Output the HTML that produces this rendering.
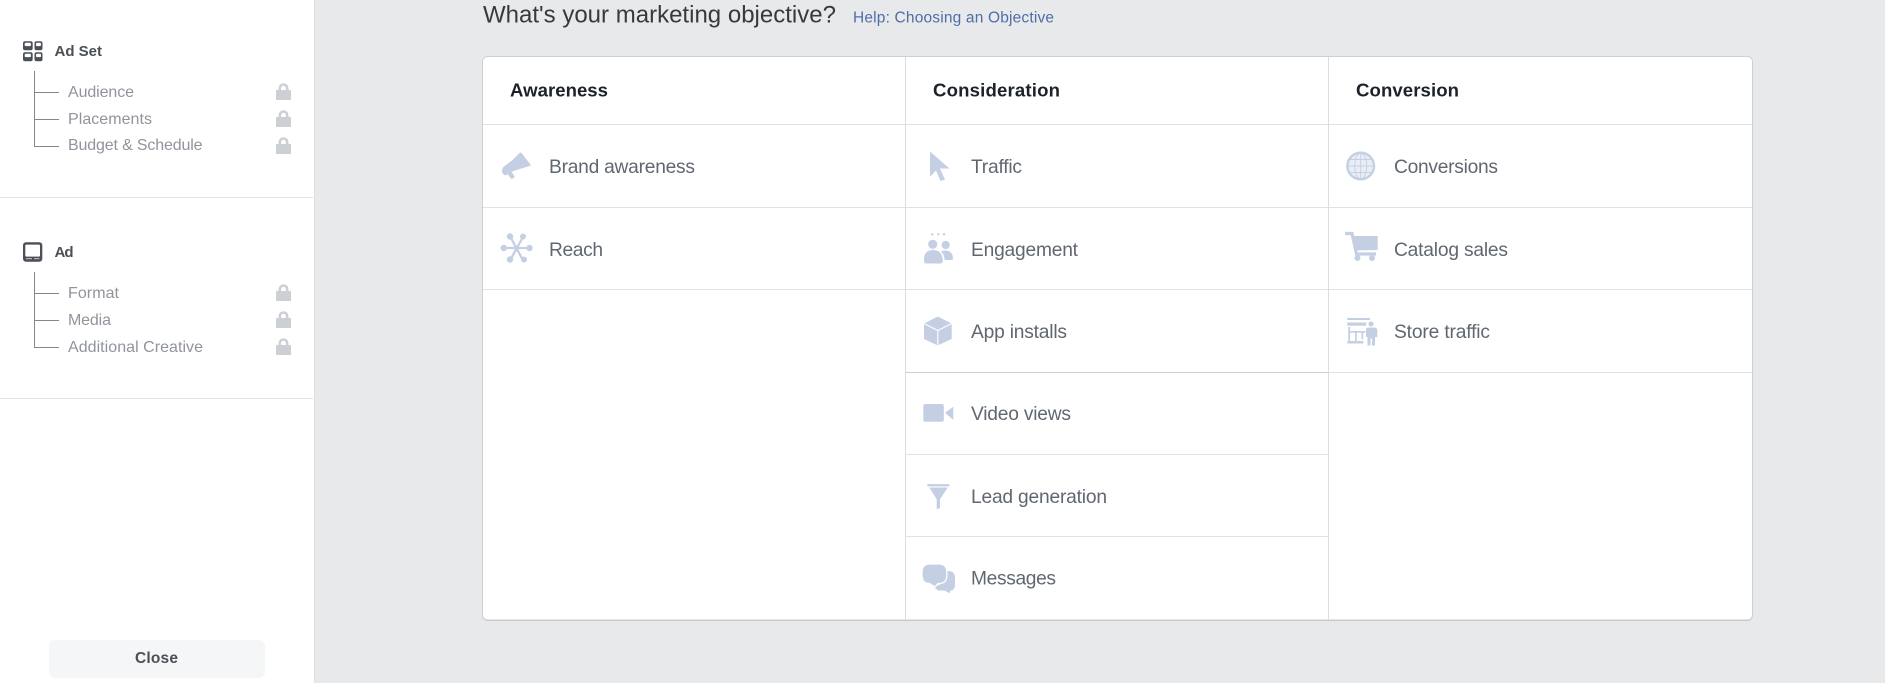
<!DOCTYPE html>
<html>
<head>
<meta charset="utf-8">
<title>Marketing objective</title>
<style>
html,body{margin:0;padding:0;width:1885px;height:683px;overflow:hidden;background:#e8e9eb}
svg{display:block}
text{font-family:"Liberation Sans",Arial,sans-serif;white-space:pre}
.item{font-size:19.2px;fill:#606770}
.head{font-size:18.6px;font-weight:700;fill:#1d2129}
.sub{font-size:16px;fill:#90949c}
.sec{font-size:15px;font-weight:700;fill:#4b4f56}
.ln{stroke:#e0e1e4;stroke-width:1;fill:none}
.tr{stroke:#85878b;stroke-width:1;fill:none}
.ic{fill:#c5cfe3}
.ics{stroke:#c5cfe3;fill:none}
.lk{fill:#ccd0d5}
</style>
</head>
<body>
<svg width="1885" height="683" viewBox="0 0 1885 683" xmlns="http://www.w3.org/2000/svg">
<defs>
<g id="lock">
<path class="lk" d="M0.5 7h14q.5 0 .5 .5v9q0 .5-.5 .5h-14q-.5 0-.5-.5v-9q0-.5 .5-.5z"/>
<path d="M3.8 8V5.2a3.700 3.700 0 0 1 7.400 0V8" fill="none" stroke="#ccd0d5" stroke-width="2.600"/>
</g>
</defs>
<rect width="1885" height="683" fill="#e8e9eb"/>

<!-- Sidebar -->
<rect x="0" y="0" width="314" height="683" fill="#fff"/>
<rect x="314" y="0" width="1" height="683" fill="#dddfe2"/>
<path d="M0 197.500H313M0 398.500H313" stroke="#e2e3e6" stroke-width="1" fill="none"/>

<!-- Ad Set icon -->
<g>
<rect x="23" y="41.300" width="9.700" height="8.900" rx="2" fill="#4b4f56"/>
<rect x="34.500" y="41.300" width="8" height="8.900" rx="2" fill="#4b4f56"/>
<rect x="23" y="52.300" width="9.700" height="8.900" rx="2" fill="#4b4f56"/>
<rect x="34.500" y="52.300" width="8" height="8.900" rx="2" fill="#4b4f56"/>
<rect x="24.700" y="42.700" width="6.200" height="3.400" rx="1" fill="#fff"/>
<rect x="36" y="42.700" width="5" height="3.400" rx="1" fill="#fff"/>
<rect x="24.700" y="53.700" width="6.200" height="3.400" rx="1" fill="#fff"/>
<rect x="36" y="53.700" width="5" height="3.400" rx="1" fill="#fff"/>
</g>
<text class="sec" x="54.500" y="56" textLength="47.500">Ad Set</text>

<path class="tr" d="M34.500 71V146.500H59M34.500 92.500H59M34.500 119.500H59"/>
<text class="sub" x="68" y="97" textLength="66">Audience</text>
<text class="sub" x="68" y="124" textLength="84">Placements</text>
<text class="sub" x="68" y="150" textLength="134.500">Budget &amp; Schedule</text>
<use href="#lock" x="276" y="83"/>
<use href="#lock" x="276" y="110"/>
<use href="#lock" x="276" y="137"/>

<!-- Ad icon -->
<g>
<rect x="23" y="242.300" width="19.300" height="19.500" rx="3" fill="#4b4f56"/>
<rect x="25.300" y="244.600" width="14.700" height="12" rx="1" fill="#fff"/>
<rect x="26" y="258.200" width="6" height="1" fill="#c5c7ca"/>
<rect x="34" y="258.200" width="5.500" height="1" fill="#c5c7ca"/>
</g>
<text class="sec" x="54.500" y="257" textLength="19">Ad</text>

<path class="tr" d="M34.500 272V347.500H59M34.500 293.500H59M34.500 320.500H59"/>
<text class="sub" x="68" y="298" textLength="51">Format</text>
<text class="sub" x="68" y="325" textLength="43">Media</text>
<text class="sub" x="68" y="352" textLength="135">Additional Creative</text>
<use href="#lock" x="276" y="284"/>
<use href="#lock" x="276" y="311"/>
<use href="#lock" x="276" y="338"/>

<!-- Close -->
<rect x="49" y="640" width="216" height="38" rx="6" fill="#f5f6f7"/>
<text x="135" y="663" font-size="15.500" font-weight="700" fill="#4b4f56" textLength="43">Close</text>

<!-- Title -->
<text x="483" y="22.700" font-size="24" fill="#36393f" textLength="353">What's your marketing objective?</text>
<text x="853" y="22.500" font-size="15.500" fill="#4f6ea8" textLength="201">Help: Choosing an Objective</text>

<!-- Card -->
<rect x="482.500" y="57" width="1270" height="564" rx="5" fill="#bfc1c5"/>
<rect x="482.500" y="56.500" width="1270" height="563.500" rx="5" fill="#fff" stroke="#ccd0d5"/>
<path class="ln" d="M483 124.500H1752M483 207.500H1752M483 289.500H1752M905 372.500H1752M905 454.500H1329M905 536.500H1329"/>
<path d="M905 372.500H1329" stroke="#ccd0d5" stroke-width="1"/>
<path d="M905.500 57V620M1328.500 57V620" stroke="#dcdde0" stroke-width="1"/>

<text class="head" x="510" y="96.500" textLength="98">Awareness</text>
<text class="head" x="933" y="96.500" textLength="127">Consideration</text>
<text class="head" x="1356" y="96.500" textLength="103">Conversion</text>

<text class="item" x="549" y="173" textLength="146">Brand awareness</text>
<text class="item" x="549" y="256" textLength="54">Reach</text>
<text class="item" x="971" y="173" textLength="51">Traffic</text>
<text class="item" x="971" y="256" textLength="107">Engagement</text>
<text class="item" x="971" y="338" textLength="96">App installs</text>
<text class="item" x="971" y="420" textLength="100">Video views</text>
<text class="item" x="971" y="503" textLength="136">Lead generation</text>
<text class="item" x="971" y="584.500" textLength="85">Messages</text>
<text class="item" x="1394" y="173" textLength="104">Conversions</text>
<text class="item" x="1394" y="256" textLength="114">Catalog sales</text>
<text class="item" x="1394" y="338" textLength="96">Store traffic</text>

<!-- Megaphone -->
<path class="ic" d="M519.500 153Q520.500 152 521.500 153L530.500 164.500Q531 166 529.500 166L512 171.500L505.500 175.500Q501.500 174 502 170Q502.500 167.500 504.500 166L512 160.500Z"/>
<path class="ic" d="M507 173.500L511.500 171.500L515 177L511.500 179.300Z"/>

<!-- Reach -->
<g>
<path d="M503 248H530M510.500 237L522.500 259.500M523 237L510.500 259.500" stroke="#c5cfe3" stroke-width="2.300" fill="none"/>
<circle class="ic" cx="503.800" cy="248" r="3.200"/>
<circle class="ic" cx="529.500" cy="248" r="3.200"/>
<circle class="ic" cx="510" cy="236.500" r="3.200"/>
<circle class="ic" cx="523" cy="236.500" r="3"/>
<circle class="ic" cx="510" cy="259.500" r="3.200"/>
<circle class="ic" cx="524" cy="259.500" r="3"/>
</g>

<!-- Cursor -->
<path class="ic" d="M930 151.500L949.500 168.500L940 168.500L945 179.500L940.500 181L936 170.500L930 176.800Z"/>

<!-- Engagement -->
<g class="ic">
<circle cx="932.300" cy="234.300" r="1.200"/><circle cx="938.300" cy="234.300" r="1.200"/><circle cx="944" cy="234.300" r="1.200"/>
<circle cx="932.700" cy="244.300" r="4.600"/>
<circle cx="945.700" cy="245" r="4.100"/>
<path d="M924 261Q923.500 250 933 250Q942.500 250 942.800 261Q942.800 263.500 940 263.500H926.500Q924 263.500 924 261Z"/>
<path d="M944.500 250.500Q953 250.500 953 258.500Q953 260 951 260H944.500Q944.500 254.500 941 251.500Q942.500 250.500 944.500 250.500Z"/>
</g>

<!-- Cube -->
<path class="ic" d="M937.800 316.500L951.700 323.500V339L937.800 345.500L924 339V323.500Z"/>
<path d="M924 323.500L937.800 330.500L951.700 323.500M937.800 330.500V345.500" stroke="#fff" stroke-width="1.100" fill="none"/>

<!-- Video -->
<rect class="ic" x="923.300" y="404" width="20.500" height="17.700" rx="2"/>
<path class="ic" d="M945 412.800L953.300 406.700V420Z"/>

<!-- Funnel -->
<g class="ic">
<rect x="927.300" y="484.100" width="22" height="2.300"/>
<path d="M929.300 487.500H947.700L940 499.300V508L936.700 509.300V499.300Z"/>
</g>

<!-- Messages -->
<g>
<path class="ic" d="M941 571H948Q955 571 955 578V584Q955 590.500 950.500 590.500L949.500 593.300L944.500 590.500H938L934 587L941 584Z"/>
<path class="ic" d="M930 564H939Q946.800 564 946.800 572V575.500Q946.800 583.500 939 583.500H938L935 587L929.500 583.500Q922 583.500 922 575.500V572Q922 564 930 564Z" stroke="#fff" stroke-width="1.300"/>
</g>

<!-- Globe -->
<g>
<circle cx="1360.700" cy="166" r="13.300" fill="#e9edf5" stroke="#c5cfe3" stroke-width="2.400"/>
<ellipse cx="1360.700" cy="166" rx="6" ry="13" class="ics" stroke-width=".9"/>
<path d="M1360.700 153V179M1348 166H1374M1350 159.500H1371.500M1350 172.500H1371.500" class="ics" stroke-width=".9"/>
</g>

<!-- Cart -->
<g class="ic">
<path d="M1345 233.500H1352L1356.500 254H1376" fill="none" stroke="#c5cfe3" stroke-width="3.200"/>
<path d="M1353 236H1377.700V250L1356.500 250.500Z"/>
<circle cx="1357.500" cy="258" r="3"/>
<circle cx="1372" cy="258" r="3"/>
</g>

<!-- Store -->
<g class="ic">
<rect x="1347.300" y="318" width="22.700" height="2"/>
<rect x="1347.300" y="322.500" width="19" height="3.200"/>
<rect x="1348.300" y="327" width="1.800" height="14"/>
<rect x="1348.300" y="331" width="17" height="1.700"/>
<rect x="1355" y="331" width="1.700" height="10"/>
<rect x="1361.500" y="331" width="1.700" height="8.500"/>
<rect x="1347.300" y="341" width="16" height="2.500"/>
<circle cx="1371" cy="324" r="2.500"/>
<path d="M1366 330Q1366 327.500 1368.500 327.500H1373.500Q1377.300 327.500 1377.300 330V337H1375V345.500H1372V338.500H1370.500V345.500H1367.500V337H1366Z"/>
</g>
</svg>
</body>
</html>
